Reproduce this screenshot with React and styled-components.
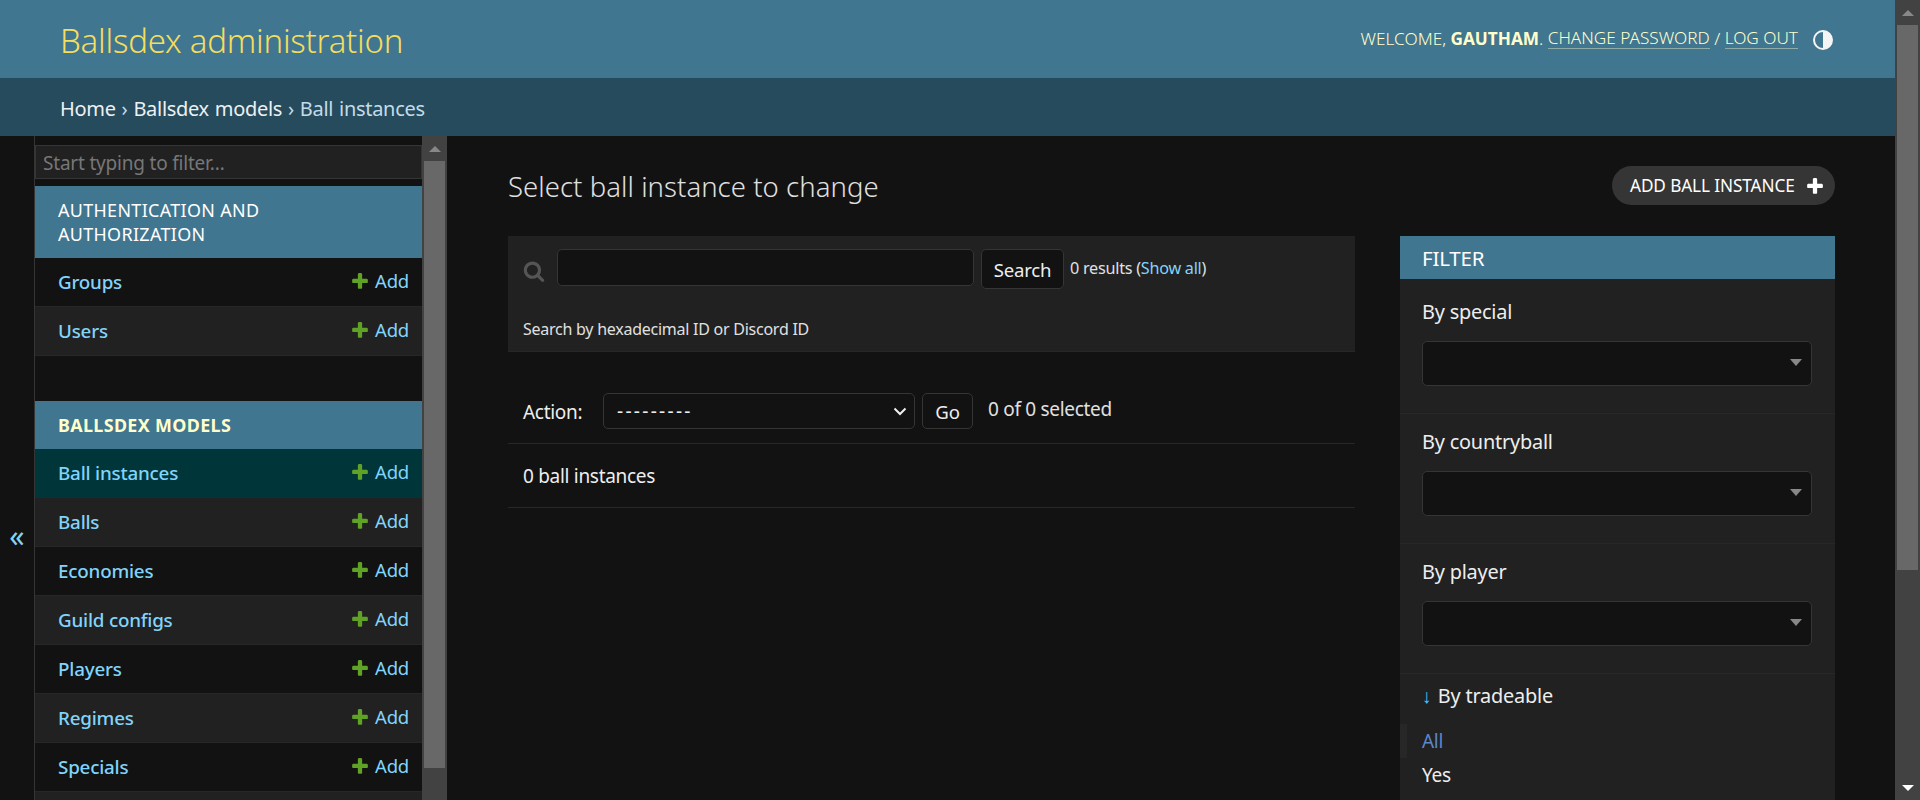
import React from "react";
import styled, { createGlobalStyle } from "styled-components";

const Global = createGlobalStyle`
  html { color-scheme: dark; background: #121212; }
  body { margin: 0; background: #121212; color: #eee; font-family: "Noto Sans", "Open Sans", sans-serif; font-size: 17px; overflow: hidden; }
  * { box-sizing: border-box; }
`;

const chevron = `url("data:image/svg+xml,%3Csvg xmlns='http://www.w3.org/2000/svg' width='14' height='9'%3E%3Cpath d='M1.5 1.5L7 7L12.5 1.5' fill='none' stroke='%23eee' stroke-width='2'/%3E%3C/svg%3E")`;

const Viewport = styled.div` display: flex; height: 800px; overflow: hidden; `;
const Page = styled.div` flex: 1; min-width: 0; display: flex; flex-direction: column; `;

const Bar = styled.div`
  flex: none; width: 25px; background: #424242; display: flex; flex-direction: column; align-items: center;
`;
const BarButton = styled.div`
  flex: none; height: 25px; width: 100%; display: flex; align-items: center; justify-content: center; margin-top: ${p => (p.$end ? "auto" : 0)};
  &::before { content: ""; border-left: 6px solid transparent; border-right: 6px solid transparent;
    ${p => (p.$end ? `border-top: 6px solid ${p.$c};` : `border-bottom: 6px solid ${p.$c};`)} }
`;
const Thumb = styled.div` flex: none; width: 21px; height: ${p => p.$h}px; background: #686868; `;

const Header = styled.header`
  flex: none; height: 78px; background: #417690; display: flex; align-items: center; justify-content: space-between;
  padding: 0 62px 0 60px;
`;
const Brand = styled.h1`
  margin: 2px 0 0; font-size: 33px; font-weight: 300; color: #f5dd5d; letter-spacing: -0.24px;
`;
const UserTools = styled.div`
  display: flex; align-items: center; margin-bottom: 2px; color: #ffc; font-size: 17.2px; font-weight: 300; text-transform: uppercase; letter-spacing: 0; white-space: pre;
`;
const UserName = styled.strong` font-weight: 700; `;
const UserLink = styled.a` color: #ffc; border-bottom: 1px solid rgba(255,255,204,.4); line-height: 20px; `;
const ThemeIcon = styled.svg` width: 20px; height: 20px; margin-left: 15px; position: relative; top: 2px; `;

const Crumbs = styled.nav`
  flex: none; height: 58px; background: #264b5d; padding: 2px 60px 0; display: flex; align-items: center; font-size: 20px; color: #c4dce8; letter-spacing: -0.3px; word-spacing: 1px; white-space: pre;
`;
const CrumbLink = styled.a` color: #fff; opacity: .92; `;

const Main = styled.div` flex: 1; min-height: 0; display: flex; align-items: stretch; `;
const Toggle = styled.button`
  flex: none; width: 35px; padding: 0; background: #121212; border: 0; border-right: 1px solid #353535;
  color: #81d4fa; font-size: 30px; font-family: inherit; line-height: 1; align-self: flex-start; height: 800px;
`;
const Sidebar = styled.nav` flex: none; width: 387px; padding-top: 9px; overflow: hidden; `;
const SideFilter = styled.input`
  display: block; width: 100%; height: 34px; margin-bottom: 7px; padding: 1px 7px 0; background: #212121; border: 1px solid #353535; color: #eee;
  font: inherit; font-size: 19px; letter-spacing: -.2px; outline: 0;
  &::placeholder { color: #777; opacity: 1; }
`;
const Module = styled.section` margin-bottom: 45px; `;
const ModuleHead = styled.div`
  background: #417690; padding: 12px 23px; font-size: 17.9px; line-height: 24px; letter-spacing: .35px; text-transform: uppercase;
  color: ${p => (p.$current ? "#ffc" : "#fff")}; font-weight: ${p => (p.$current ? 700 : 400)};
`;
const ModelRow = styled.div`
  height: 49px; display: flex; align-items: center; justify-content: space-between; padding: 0 13px 0 23px; border-bottom: 1px solid #272727;
  background: ${p => (p.$current ? "#00363a" : p.$alt ? "#212121" : "#121212")};
`;
const ModelName = styled.a` color: #81d4fa; font-size: 18.8px; font-weight: 500; letter-spacing: -.2px; `;
const AddLink = styled.a` display: flex; align-items: center; gap: 5px; color: #81d4fa; font-size: 18.5px; line-height: 24px; letter-spacing: -.2px; padding-bottom: 2px; `;
const PlusIcon = styled.svg` width: 20px; height: 20px; fill: ${p => p.$c || "#5fa225"}; flex: none; `;

const SideScroll = styled(Bar)` width: 25px; `;

const Content = styled.main` flex: 1; min-width: 0; padding: 30px 60px 0 61px; overflow: hidden; `;
const TitleRow = styled.div` display: flex; align-items: center; justify-content: space-between; height: 39px; margin-bottom: 31px; `;
const Title = styled.h2` margin: 2px 0 0; font-size: 27.5px; line-height: 42px; font-weight: 300; color: #e0e0e0; letter-spacing: .05px; `;
const AddButton = styled.a`
  height: 39px; width: 223px; border-radius: 20px; background: #353535; color: #fff; display: flex; align-items: center; justify-content: space-between; padding: 0 10px 0 18px;
  font-size: 17.2px; text-transform: uppercase; letter-spacing: -.1px;
`;
const Columns = styled.div` display: flex; align-items: flex-start; gap: 45px; `;
const Changelist = styled.div` flex: none; width: 847px; `;
const SearchPanel = styled.div` background: #212121; height: 116px; padding: 13px 15px; border-bottom: 1px solid #272727; `;
const SearchRow = styled.div` display: flex; align-items: flex-start; `;
const SearchIcon = styled.svg` width: 22px; height: 22px; fill: #555; flex: none; margin: 11px 12px 0 0; `;
const SearchInput = styled.input`
  width: 417px; height: 37px; background: #121212; border: 1px solid #353535; border-radius: 5px; margin-right: 7px; outline: 0;
`;
const Button = styled.button`
  height: ${p => p.$h}px; width: ${p => p.$w}px; background: #121212; border: 1px solid #353535; border-radius: 5px; color: #eee; padding: 0; font: inherit; font-size: 18.6px; letter-spacing: -.2px;
`;
const Results = styled.span` margin-left: 6px; font-size: 16.2px; line-height: 38px; letter-spacing: -.25px; color: #e0e0e0; `;
const ShowAll = styled.a` color: #81d4fa; `;
const Help = styled.div` margin-top: 28px; line-height: 24px; font-size: 16px; letter-spacing: -.25px; color: #e0e0e0; `;
const ActionRow = styled.div`
  height: 92px; padding: 41px 15px 0; display: flex; align-items: flex-start; border-bottom: 1px solid #272727;
`;
const ActionLabel = styled.label` width: 80px; line-height: 38px; font-size: 19px; letter-spacing: -.3px; `;
const ActionSelect = styled.select`
  appearance: none; width: 312px; height: 36px; background: #121212 ${chevron} no-repeat right 7px center; border: 1px solid #353535; border-radius: 5px; color: #eee; margin-right: 7px; padding: 0 13px; font: inherit; font-size: 19px; letter-spacing: 2.3px; outline: 0;
`;
const Selected = styled.span` margin-left: 15px; line-height: 33px; font-size: 19px; letter-spacing: -.3px; color: #e0e0e0; `;
const CountRow = styled.div` height: 64px; padding: 0 15px; display: flex; align-items: center; border-bottom: 1px solid #272727; font-size: 19px; letter-spacing: -.3px; `;

const FilterPanel = styled.aside` flex: none; width: 435px; background: #212121; `;
const FilterHead = styled.div` height: 43px; background: #417690; color: #fff; padding: 0 22px; display: flex; align-items: center; font-size: 20.5px; text-transform: uppercase; letter-spacing: -.2px; `;
const FilterGroup = styled.div`
  padding: ${p => (p.$first ? 19 : 14)}px 22px 0; height: ${p => (p.$first ? 135 : 130)}px; border-bottom: 1px solid #272727;
`;
const FilterTitle = styled.div` font-size: 19.9px; line-height: 28px; letter-spacing: -.2px; color: #eee; `;
const FakeSelect = styled.div`
  position: relative; height: 45px; margin-top: 15px; width: 390px; background: #121212; border: 1px solid #353535; border-radius: 5px;
  &::after { content: ""; position: absolute; right: 9px; top: 17px; border: 6px solid transparent; border-top: 7px solid #888; border-bottom: 0; }
`;
const ListGroup = styled.div` padding: 8px 0 40px; `;
const ListTitle = styled(FilterTitle)` padding-left: 22px; `;
const Arrow = styled.span` color: #4fc3f7; margin-right: 6px; `;
const Choices = styled.ul` list-style: none; margin: 14px 0 0; padding: 0; `;
const Choice = styled.li`
  height: 34px; display: flex; align-items: center; font-size: 19px; letter-spacing: -.3px;
  padding-left: ${p => (p.$on ? 15 : 22)}px;
  border-left: ${p => (p.$on ? "7px solid #272727" : "0")};
  color: ${p => (p.$on ? "#5b87cf" : "#eee")};
`;

const plus = "M1600 796v192q0 40-28 68t-68 28h-416v416q0 40-28 68t-68 28h-192q-40 0-68-28t-28-68v-416h-416q-40 0-68-28t-28-68v-192q0-40 28-68t68-28h416v-416q0-40 28-68t68-28h192q40 0 68 28t28 68v416h416q40 0 68 28t28 68z";
const search = "M1216 832q0-185-131.5-316.5t-316.5-131.5-316.5 131.5-131.5 316.5 131.5 316.5 316.5 131.5 316.5-131.5 131.5-316.5zm512 832q0 52-38 90t-90 38q-54 0-90-38l-343-342q-179 124-399 124-143 0-273.5-55.5t-225-150-150-225-55.5-273.5 55.5-273.5 150-225 225-150 273.5-55.5 273.5 55.5 225 150 150 225 55.5 273.5q0 220-124 399l343 343q37 37 37 90z";

const Row = ({ name, alt, current }) => (
  <ModelRow $alt={alt} $current={current}>
    <ModelName>{name}</ModelName>
    <AddLink><PlusIcon viewBox="0 0 1792 1792"><path d={plus} /></PlusIcon>Add</AddLink>
  </ModelRow>
);

const models = ["Ball instances", "Balls", "Economies", "Guild configs", "Players", "Regimes", "Specials"];

export default function App() {
  return (
    <Viewport>
      <Global />
      <Page>
        <Header>
          <Brand>Ballsdex administration</Brand>
          <UserTools>
            Welcome, <UserName>Gautham</UserName>. <UserLink>Change password</UserLink> / <UserLink>Log out</UserLink>
            <ThemeIcon viewBox="0 0 20 20">
              <circle cx="10" cy="10" r="9" fill="none" stroke="#f5f5f5" strokeWidth="2" />
              <path d="M10 1a9 9 0 0 1 0 18z" fill="#f5f5f5" />
            </ThemeIcon>
          </UserTools>
        </Header>
        <Crumbs><CrumbLink>Home</CrumbLink> › <CrumbLink>Ballsdex models</CrumbLink> › Ball instances</Crumbs>
        <Main>
          <Toggle>«</Toggle>
          <Sidebar>
            <SideFilter placeholder="Start typing to filter…" />
            <Module>
              <ModuleHead>Authentication and Authorization</ModuleHead>
              <Row name="Groups" />
              <Row name="Users" alt />
            </Module>
            <Module>
              <ModuleHead $current>Ballsdex models</ModuleHead>
              {models.map((m, i) => <Row key={m} name={m} current={i === 0} alt={i % 2 === 1} />)}
              <ModelRow $alt />
            </Module>
          </Sidebar>
          <SideScroll>
            <BarButton $c="#888" />
            <Thumb $h={607} />
          </SideScroll>
          <Content>
            <TitleRow>
              <Title>Select ball instance to change</Title>
              <AddButton>Add ball instance<PlusIcon $c="#fff" viewBox="0 0 1792 1792"><path d={plus} /></PlusIcon></AddButton>
            </TitleRow>
            <Columns>
              <Changelist>
                <SearchPanel>
                  <SearchRow>
                    <SearchIcon viewBox="0 0 1792 1792"><path d={search} /></SearchIcon>
                    <SearchInput />
                    <Button $w={83} $h={40}>Search</Button>
                    <Results>0 results (<ShowAll>Show all</ShowAll>)</Results>
                  </SearchRow>
                  <Help>Search by hexadecimal ID or Discord ID</Help>
                </SearchPanel>
                <ActionRow>
                  <ActionLabel>Action:</ActionLabel>
                  <ActionSelect><option>---------</option></ActionSelect>
                  <Button $w={51} $h={36}>Go</Button>
                  <Selected>0 of 0 selected</Selected>
                </ActionRow>
                <CountRow>0 ball instances</CountRow>
              </Changelist>
              <FilterPanel>
                <FilterHead>Filter</FilterHead>
                <FilterGroup $first><FilterTitle>By special</FilterTitle><FakeSelect /></FilterGroup>
                <FilterGroup><FilterTitle>By countryball</FilterTitle><FakeSelect /></FilterGroup>
                <FilterGroup><FilterTitle>By player</FilterTitle><FakeSelect /></FilterGroup>
                <ListGroup>
                  <ListTitle><Arrow>↓</Arrow>By tradeable</ListTitle>
                  <Choices>
                    <Choice $on>All</Choice>
                    <Choice>Yes</Choice>
                  </Choices>
                </ListGroup>
              </FilterPanel>
            </Columns>
          </Content>
        </Main>
      </Page>
      <Bar>
        <BarButton $c="#888" />
        <Thumb $h={545} />
        <BarButton $end $c="#fff" />
      </Bar>
    </Viewport>
  );
}
